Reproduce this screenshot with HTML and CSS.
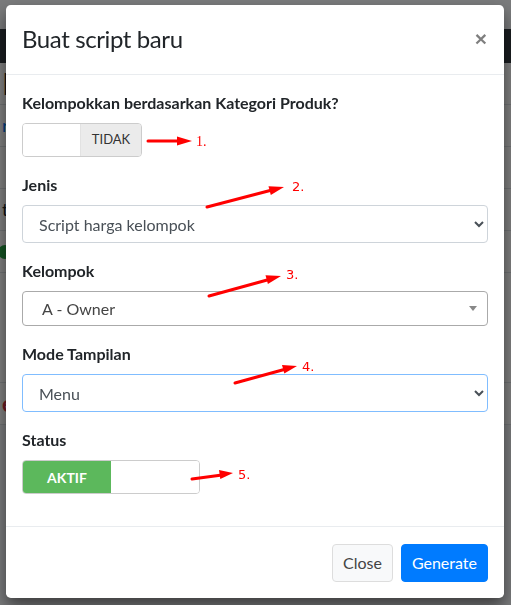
FILE: index.html
```html
<!DOCTYPE html>
<html lang="id">
<head>
<meta charset="utf-8">
<title>Buat script baru</title>
<link rel="stylesheet" href="styles.css">
</head>
<body>
<div class="page">
  <div class="navbar"></div>
  <div class="content">
    <div class="row"><span class="frag big">H</span></div>
    <div class="row"><span class="frag link">rg</span></div>
    <div class="row"></div>
    <div class="row"><span class="frag">t</span></div>
    <div class="row"><span class="dot"></span></div>
    <div class="row tall"></div>
    <div class="row"><span class="frag red">e</span></div>
  </div>
</div>
<div class="backdrop"></div>

<div class="modal">
  <div class="modal-header">
    <h4 class="modal-title">Buat script baru</h4>
    <button class="close" type="button">&times;</button>
  </div>
  <div class="modal-body">
    <div class="form-group">
      <label class="label">Kelompokkan berdasarkan Kategori Produk?</label>
      <div class="toggle toggle-off">
        <span class="toggle-handle"></span>
        <span class="toggle-label off">TIDAK</span>
      </div>
    </div>
    <div class="form-group">
      <label class="label">Jenis</label>
      <select class="form-control">
        <option>Script harga kelompok</option>
      </select>
    </div>
    <div class="form-group">
      <label class="label">Kelompok</label>
      <div class="select2">
        <span class="select2-text">A - Owner</span>
        <span class="select2-caret"></span>
      </div>
    </div>
    <div class="form-group">
      <label class="label">Mode Tampilan</label>
      <select class="form-control focused">
        <option>Menu</option>
      </select>
    </div>
    <div class="form-group">
      <label class="label">Status</label>
      <div class="toggle toggle-on">
        <span class="toggle-label on">AKTIF</span>
        <span class="toggle-handle"></span>
      </div>
    </div>
  </div>
  <div class="modal-footer">
    <button class="btn btn-light" type="button">Close</button>
    <button class="btn btn-primary" type="button">Generate</button>
  </div>

  <svg class="annotations" width="498" height="592" viewBox="6 5 498 592">
    <g fill="#ff0000" stroke="#ff0000" stroke-width="3" stroke-linecap="round">
      <line x1="148" y1="141" x2="180" y2="141"/>
      <polygon stroke="none" points="192,141 177,136.5 177,145.5"/>
      <line x1="207" y1="207" x2="272" y2="190"/>
      <polygon stroke="none" points="284,187 268.5,186.3 270.8,195"/>
      <line x1="209" y1="296" x2="269" y2="279.5"/>
      <polygon stroke="none" points="281,276 265.5,275.3 267.9,284"/>
      <line x1="235" y1="383" x2="286" y2="369"/>
      <polygon stroke="none" points="297,366 282,365 284.3,373.6"/>
      <line x1="192" y1="479" x2="222" y2="475"/>
      <polygon stroke="none" points="233,473 219,470 220.3,479"/>
    </g>
    <g fill="#ff0000" class="num">
      <text x="196" y="146" class="serif">1.</text>
      <text x="292" y="191">2.</text>
      <text x="286" y="279">3.</text>
      <text x="302" y="371">4.</text>
      <text x="238" y="479">5.</text>
    </g>
  </svg>
</div>
</body>
</html>
```

FILE: styles.css
```css
* { box-sizing: border-box; }

html, body {
  margin: 0;
  padding: 0;
  width: 511px;
  height: 605px;
  overflow: hidden;
}

body {
  font-family: "Lato", "Noto Sans", sans-serif;
  font-size: 16px;
  line-height: 1.5;
  color: #212529;
  background: #ffffff;
}

/* underlying page (dimmed) */
.page {
  padding-top: 29px;
  height: 605px;
  background: #f4f6f9;
}
.navbar {
  height: 34px;
  background: #343a40;
}
.content {
  display: flex;
  flex-direction: column;
}
.row {
  height: 42px;
  border-bottom: 1px solid #dee2e6;
  display: flex;
  align-items: center;
  padding-left: 2px;
  background: #ffffff;
}
.row.tall { height: 110px; }
.frag { font-size: 18px; color: #212529; }
.frag.big { font-size: 30px; }
.frag.link { color: #007bff; }
.frag.red { color: #dc3545; font-weight: 700; font-size: 22px; }
.dot {
  width: 14px; height: 14px; border-radius: 50%;
  background: #28a745; margin-left: -4px;
}

.backdrop {
  position: fixed;
  inset: 0;
  background: rgba(0, 0, 0, 0.5);
}

/* modal */
.modal {
  position: fixed;
  left: 6px;
  top: 5px;
  width: 498px;
  background: #ffffff;
  border-radius: 4.8px;
  box-shadow: 0 8px 16px rgba(0, 0, 0, 0.5);
  display: flex;
  flex-direction: column;
}

.modal-header {
  display: flex;
  align-items: flex-start;
  justify-content: space-between;
  padding: 16px 16px 17px;
  border-bottom: 1px solid #e9ecef;
}
.modal-title {
  margin: 0;
  font-size: 24px;
  font-weight: 400;
  line-height: 36px;
  color: #212529;
  letter-spacing: -0.4px;
}
.close {
  border: 0;
  background: transparent;
  padding: 0;
  font-family: "Liberation Sans", sans-serif;
  font-size: 21px;
  font-weight: 700;
  line-height: 1;
  color: #000;
  opacity: 0.5;
  margin-right: 1px;
  margin-top: 7px;
}

.modal-body {
  padding: 16px 16px 16px;
}
.form-group {
  margin-bottom: 16px;
  display: flex;
  flex-direction: column;
  align-items: flex-start;
}
.label {
  display: block;
  font-weight: 700;
  margin-bottom: 8px;
  line-height: 24px;
}

/* toggles */
.toggle {
  display: flex;
  border: 1px solid #cccccc;
  border-radius: 4px;
  overflow: hidden;
}
.toggle-off { width: 120px; height: 34px; }
.toggle-on { width: 178px; height: 34px; }
.toggle-handle {
  flex: 1;
  background: #ffffff;
}
.toggle-label {
  display: flex;
  align-items: center;
  justify-content: center;
  font-size: 14px;
}
.toggle-label.off {
  width: 61px;
  background: #ebebeb;
  color: #333333;
  border-left: 1px solid #e2e2e2;
  font-size: 13px;
}
.toggle-label.on {
  width: 88px;
  background: #5cb85c;
  color: #ffffff;
  font-weight: 700;
}

/* selects */
.form-control {
  width: 100%;
  height: 38px;
  padding: 6px 12px;
  font-family: inherit;
  font-size: 16px;
  color: #495057;
  background-color: #ffffff;
  border: 1px solid #ced4da;
  border-radius: 4px;
}
.form-control.focused {
  border-color: #80bdff;
  outline: none;
}

.select2 {
  width: 100%;
  height: 35px;
  border: 1px solid #aaaaaa;
  border-radius: 4px;
  display: flex;
  align-items: center;
  justify-content: space-between;
  padding: 0 10px 0 19px;
}
.select2-text {
  color: #444444;
  font-size: 16px;
}
.select2-caret {
  width: 0;
  height: 0;
  border-style: solid;
  border-width: 5px 4px 0 4px;
  border-color: #888888 transparent transparent transparent;
}

/* footer */
.modal-footer {
  display: flex;
  justify-content: flex-end;
  gap: 8px;
  padding: 17px 16px 16px;
  border-top: 1px solid #e9ecef;
}
.btn {
  height: 38px;
  padding: 6px 10px;
  font-family: inherit;
  font-size: 16px;
  line-height: 24px;
  border-radius: 4px;
  border: 1px solid transparent;
}
.btn-light {
  background: #f8f9fa;
  border-color: #dddddd;
  color: #444444;
}
.btn-primary {
  background: #007bff;
  border-color: #007bff;
  color: #ffffff;
}

/* annotation overlay */
.annotations {
  position: absolute;
  left: 0;
  top: 0;
  pointer-events: none;
}
.num text {
  font-family: "DejaVu Sans", sans-serif;
  font-size: 13px;
}
.num text.serif {
  font-family: "Liberation Serif", serif;
  font-size: 14px;
}
```
